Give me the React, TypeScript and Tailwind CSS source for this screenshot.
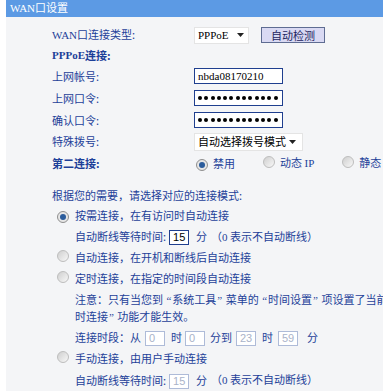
import React from "react";

const CJK = '"Noto Sans CJK SC", "Noto Sans", sans-serif';
const SERIF = '"Liberation Serif", "Noto Sans CJK SC", serif';

function Radio({ checked = false }: { checked?: boolean }) {
  return (
    <span
      className={
        "inline-flex w-[12px] h-[12px] shrink-0 items-center justify-center rounded-full border " +
        (checked
          ? "border-[#8f8f8f] bg-[#e6e6e6]"
          : "border-[#bdbdbd] bg-gradient-to-br from-[#cfcfcf] to-[#f8f8f8]")
      }
    >
      {checked && <span className="block w-[6px] h-[6px] rounded-full bg-[#2b5c9c]" />}
    </span>
  );
}

function Arrow() {
  return (
    <svg width="7" height="4" viewBox="0 0 7 4" className="shrink-0">
      <path d="M0 0 L7 0 L3.5 4 Z" fill="#222" />
    </svg>
  );
}

function Dots() {
  return (
    <div className="w-[89px] h-[16px] bg-white border border-[#1f3f8f] flex items-center pl-[3px] gap-[2.3px]">
      {Array.from({ length: 13 }).map((_, i) => (
        <span key={i} className="block w-[4px] h-[4px] rounded-full bg-black" />
      ))}
    </div>
  );
}

function Q({ c }: { c: string }) {
  return (
    <span className="mx-[1px]" style={{ fontFamily: SERIF }}>
      {c}
    </span>
  );
}

function SmallBox({ value, disabled = false }: { value: string; disabled?: boolean }) {
  return (
    <span
      className={
        "inline-flex w-[20px] h-[15px] items-center pl-[3px] bg-white border text-[11px] leading-none " +
        (disabled ? "border-[#aebbd8] text-[#a9b3c9]" : "border-[#1f3f8f] text-black")
      }
      style={{ fontFamily: '"Liberation Sans", sans-serif' }}
    >
      {value}
    </span>
  );
}

export default function App() {
  return (
    <div
      className="w-[383px] h-[391px] overflow-hidden bg-white flex text-[11px] text-[#1d3f99]"
      style={{ fontFamily: CJK }}
    >
      <div className="w-[6px] shrink-0 bg-white" />
      <div className="flex-1 min-w-0 flex flex-col">
        <div className="h-[17px] shrink-0 bg-[#5c9ae4] text-white pl-[4px] leading-[14px]">
          <span style={{ fontFamily: SERIF }}>WAN</span>口设置
        </div>
        <div className="flex-1 bg-[#f4f5f7] pl-[46px] pt-[8px] whitespace-nowrap">
          <div className="h-[20px] flex items-center">
            <div className="w-[142px] shrink-0">
              <span style={{ fontFamily: SERIF }}>WAN</span>口连接类型:
            </div>
            <div className="w-[55px] h-[17px] bg-white border border-[#e4e4e4] flex items-center pl-[3px] pr-[4px] justify-between text-black">
              <span style={{ fontFamily: SERIF }} className="text-[11px]">PPPoE</span>
              <Arrow />
            </div>
            <div className="ml-[12px] w-[64px] h-[16px] bg-[#d9d9f3] border border-[#5e6c92] flex items-center justify-center text-[#1c2460] text-[11px]">
              自动检测
            </div>
          </div>
          <div className="h-[20px] flex items-center font-bold">
            <span style={{ fontFamily: SERIF }}>PPPoE</span>连接:
          </div>
          <div className="h-[22px] flex items-center">
            <div className="w-[142px] shrink-0">上网帐号:</div>
            <div
              className="w-[89px] h-[16px] bg-white border border-[#1f3f8f] flex items-center pl-[3px] text-black text-[11px]"
              style={{ fontFamily: SERIF }}
            >
              nbda08170210
            </div>
          </div>
          <div className="h-[22px] flex items-center">
            <div className="w-[142px] shrink-0">上网口令:</div>
            <Dots />
          </div>
          <div className="h-[22px] flex items-center">
            <div className="w-[142px] shrink-0">确认口令:</div>
            <Dots />
          </div>
          <div className="h-[21px] flex items-center">
            <div className="w-[142px] shrink-0">特殊拨号:</div>
            <div className="w-[109px] h-[18px] bg-white border border-[#e4e4e4] flex items-center pl-[3px] pr-[6px] justify-between text-black">
              <span>自动选择拨号模式</span>
              <Arrow />
            </div>
          </div>
          <div className="h-[22px] flex items-center">
            <div className="w-[142px] shrink-0 font-bold">第二连接:</div>
            <div className="flex items-center">
              <span className="ml-[2px]"><Radio checked /></span>
              <span className="ml-[5px]">禁用</span>
              <span className="ml-[28px]"><Radio /></span>
              <span className="ml-[5px]">动态 <span style={{ fontFamily: SERIF }}>IP</span></span>
              <span className="ml-[28px]"><Radio /></span>
              <span className="ml-[5px]">静态 <span style={{ fontFamily: SERIF }}>IP</span></span>
            </div>
          </div>

          <div className="h-[20px] mt-[11px] flex items-center">根据您的需要，请选择对应的连接模式:</div>
          <div className="h-[21px] flex items-center">
            <span className="ml-[5px]"><Radio checked /></span>
            <span className="ml-[6px]">按需连接，在有访问时自动连接</span>
          </div>
          <div className="h-[21px] flex items-center pl-[23px]">
            <span>自动断线等待时间:</span>
            <span className="ml-[3px]"><SmallBox value="15" /></span>
            <span className="ml-[7px]">分</span>
            <span className="ml-[4px]">（<span style={{ fontFamily: SERIF }}>0</span> 表示不自动断线）</span>
          </div>
          <div className="h-[21px] flex items-center">
            <span className="ml-[5px]"><Radio /></span>
            <span className="ml-[6px]">自动连接，在开机和断线后自动连接</span>
          </div>
          <div className="h-[21px] flex items-center">
            <span className="ml-[5px]"><Radio /></span>
            <span className="ml-[6px]">定时连接，在指定的时间段自动连接</span>
          </div>
          <div className="pl-[23px] mt-[2px] leading-[16px]">
            <div>
              注意：只有当您到 <Q c="“" />系统工具<Q c="”" /> 菜单的 <Q c="“" />时间设置<Q c="”" /> 项设置了当前时间后，<Q c="“" />定
            </div>
            <div>
              时连接<Q c="”" /> 功能才能生效。
            </div>
          </div>
          <div className="h-[22px] mt-[1px] flex items-center pl-[23px]">
            <span>连接时段：从</span>
            <span className="ml-[4px]"><SmallBox value="0" disabled /></span>
            <span className="ml-[6px]">时</span>
            <span className="ml-[3px]"><SmallBox value="0" disabled /></span>
            <span className="ml-[5px]">分到</span>
            <span className="ml-[4px]"><SmallBox value="23" disabled /></span>
            <span className="ml-[6px]">时</span>
            <span className="ml-[5px]"><SmallBox value="59" disabled /></span>
            <span className="ml-[9px]">分</span>
          </div>
          <div className="h-[21px] flex items-center">
            <span className="ml-[5px]"><Radio /></span>
            <span className="ml-[6px]">手动连接，由用户手动连接</span>
          </div>
          <div className="h-[22px] flex items-center pl-[23px]">
            <span>自动断线等待时间:</span>
            <span className="ml-[3px]"><SmallBox value="15" disabled /></span>
            <span className="ml-[7px]">分</span>
            <span className="ml-[4px]">（<span style={{ fontFamily: SERIF }}>0</span> 表示不自动断线）</span>
          </div>
        </div>
      </div>
    </div>
  );
}
